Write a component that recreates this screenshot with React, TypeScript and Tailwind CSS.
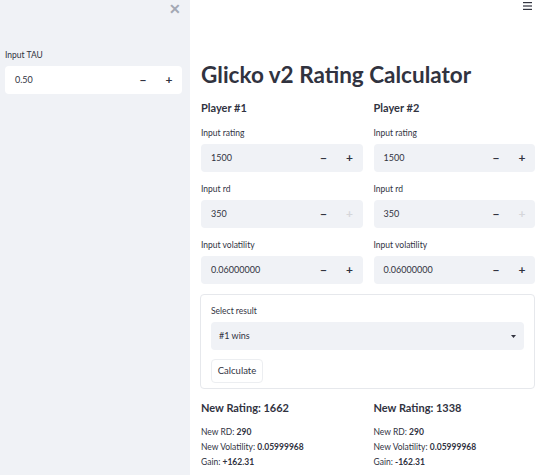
import React from "react";

const font = { fontFamily: '"Lato", "Liberation Sans", sans-serif' };

function NumberInput({ value, light, plusDisabled }: { value: string; light?: boolean; plusDisabled?: boolean }) {
    return (
        <div className={`flex h-[28px] items-center rounded-[4px] ${light ? "bg-white" : "bg-[#f0f2f6]"}`}>
            <div className="flex-1 pl-[10px] text-[9px] text-[#31333f]">{value}</div>
            <div className="flex w-[26px] justify-center text-[12px] font-bold text-[#31333f]">−</div>
            <div className={`flex w-[26px] justify-center text-[12px] font-bold ${plusDisabled ? "text-[#d5d6da]" : "text-[#31333f]"}`}>+</div>
        </div>
    );
}

function Field({ label, value, plusDisabled }: { label: string; value: string; plusDisabled?: boolean }) {
    return (
        <div className="flex flex-col">
            <div className="mb-[5px] text-[8.5px] leading-[12px] text-[#31333f]">{label}</div>
            <NumberInput value={value} plusDisabled={plusDisabled} />
        </div>
    );
}

function Player({ name }: { name: string }) {
    return (
        <div className="flex flex-col">
            <h3 className="mb-[11px] text-[11px] font-bold leading-[16px] text-[#31333f]">{name}</h3>
            <div className="flex flex-col gap-[11px]">
                <Field label="Input rating" value="1500" />
                <Field label="Input rd" value="350" plusDisabled />
                <Field label="Input volatility" value="0.06000000" />
            </div>
        </div>
    );
}

function Result({ rating, gain }: { rating: string; gain: string }) {
    return (
        <div className="flex flex-col">
            <h3 className="mb-[9px] text-[11px] font-bold leading-[16px] text-[#31333f]">New Rating: {rating}</h3>
            <div className="flex flex-col text-[8.5px] leading-[15px] text-[#31333f]">
                <p>New RD: <strong>290</strong></p>
                <p>New Volatility: <strong>0.05999968</strong></p>
                <p>Gain: <strong>{gain}</strong></p>
            </div>
        </div>
    );
}

export default function App() {
    return (
        <main className="flex h-[475px] w-[540px] overflow-hidden bg-white" style={font}>
            <aside className="flex w-[190px] shrink-0 flex-col bg-[#f0f2f6]">
                <div className="flex justify-end pr-[9px] pt-[1px] text-[14px] font-bold leading-[16px] text-[#a3a8b4]">✕</div>
                <div className="mt-[32px] pl-[5px] pr-[8px]">
                    <div className="mb-[5px] text-[8.5px] leading-[12px] text-[#31333f]">Input TAU</div>
                    <NumberInput value="0.50" light />
                </div>
            </aside>

            <section className="flex flex-1 flex-col">
                <div className="flex justify-end pr-[8px] pt-[2px]">
                    <svg width="9" height="8" viewBox="0 0 9 8">
                        <rect x="0" y="0" width="9" height="1.2" fill="#31333f" />
                        <rect x="0" y="3.4" width="9" height="1.2" fill="#31333f" />
                        <rect x="0" y="6.8" width="9" height="1.2" fill="#31333f" />
                    </svg>
                </div>

                <div className="flex flex-col pl-[11px] pr-[5px] pt-[51px]">
                    <h1 className="text-[22.5px] font-bold leading-[28px] text-[#31333f]">Glicko v2 Rating Calculator</h1>

                    <div className="mt-[11px] grid grid-cols-2 gap-[11px]">
                        <Player name="Player #1" />
                        <Player name="Player #2" />
                    </div>

                    <div className="-ml-[1px] mt-[10px] flex flex-col rounded-[4px] border border-[#e6e8ec] px-[10px] pb-[5px] pt-[10px]">
                        <div className="mb-[5px] text-[8.5px] leading-[12px] text-[#31333f]">Select result</div>
                        <div className="flex h-[28px] items-center justify-between rounded-[4px] bg-[#f0f2f6] pl-[8px] pr-[8px] text-[9px] text-[#31333f]">
                            <span>#1 wins</span>
                            <svg width="5" height="3" viewBox="0 0 5 3">
                                <path d="M0 0 L5 0 L2.5 3 Z" fill="#31333f" />
                            </svg>
                        </div>
                        <button className="mt-[9px] h-[24px] w-[52px] rounded-[4px] border border-[#eceef1] bg-white text-[9.5px] text-[#31333f]">
                            Calculate
                        </button>
                    </div>

                    <div className="mt-[11px] grid grid-cols-2 gap-[11px]">
                        <Result rating="1662" gain="+162.31" />
                        <Result rating="1338" gain="-162.31" />
                    </div>
                </div>
            </section>
        </main>
    );
}
